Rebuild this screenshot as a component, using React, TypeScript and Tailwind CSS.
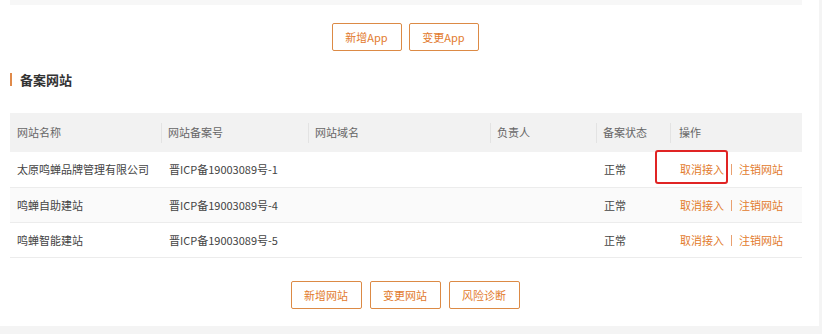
const rows = [
  { name: '太原鸣蝉品牌管理有限公司', icp: '晋ICP备19003089号-1', highlight: true },
  { name: '鸣蝉自助建站', icp: '晋ICP备19003089号-4', highlight: false },
  { name: '鸣蝉智能建站', icp: '晋ICP备19003089号-5', highlight: false },
];

const cols = ['网站名称', '网站备案号', '网站域名', '负责人', '备案状态', '操作'];
const widths = ['w-[151px]', 'w-[147px]', 'w-[182px]', 'w-[106px]', 'w-[74px]', 'flex-1'];

const OutlineButton = ({ label, w }: { label: string; w: string }) => (
  <button
    className={`${w} h-[28px] border border-[#dc8a45] rounded-[2px] text-[11px] text-[#e27a2c] bg-white`}
  >
    {label}
  </button>
);

export default function App() {
  return (
    <div
      className="w-[822px] h-[334px] bg-[#f4f4f4] overflow-hidden"
      style={{ fontFamily: '"Noto Sans CJK SC", "Liberation Sans", sans-serif' }}
    >
      <div className="w-[819px] h-[326px] bg-white flex flex-col">
        <div className="mx-[10px] w-[792px] h-[5px] bg-[#f7f7f7]" />

        <div className="flex justify-center gap-[7px] mt-[18px] pr-[9px]">
          <OutlineButton label="新增App" w="w-[70px]" />
          <OutlineButton label="变更App" w="w-[70px]" />
        </div>

        <div className="flex items-center mt-[21px] ml-[10px] h-[14px]">
          <div className="w-[2px] h-[13px] bg-[#e08a4a]" />
          <span className="ml-[8px] text-[13px] font-semibold text-[#333] leading-none">备案网站</span>
        </div>

        <div className="mt-[27px] mx-[10px] w-[792px] text-[11px]">
          <div className="flex h-[39px] items-center bg-[#f2f2f2] text-[#666]">
            {cols.map((c, i) => (
              <div key={c} className={`${widths[i]} h-[20px] flex items-center pl-[7px] relative`}>
                {i > 0 && <div className="absolute left-0 top-0 w-px h-[20px] bg-[#e3e3e3]" />}
                <span className={i === 5 ? 'pl-[2px]' : ''}>{c}</span>
              </div>
            ))}
          </div>
          {rows.map((r, idx) => (
            <div
              key={r.icp}
              className={`flex items-center border-b border-[#ececec] text-[#444] ${
                idx === 1 ? 'bg-[#fafafa]' : 'bg-white'
              } ${idx === 0 ? 'h-[36px]' : 'h-[35px]'}`}
            >
              <div className="w-[151px] pl-[7px]">{r.name}</div>
              <div className="w-[147px] pl-[8px]">{r.icp}</div>
              <div className="w-[182px]" />
              <div className="w-[106px]" />
              <div className="w-[74px] pl-[8px]">正常</div>
              <div className="flex-1 self-stretch flex items-center pl-[10px] relative text-[#e27a2c]">
                {r.highlight && (
                  <div className="absolute left-[-15px] top-[-2px] w-[73px] h-[34px] border-[2px] border-[#e02424] rounded-[3px]" />
                )}
                <span>取消接入</span>
                <span className="mx-[7px] w-px h-[11px] bg-[#e9a070]" />
                <span>注销网站</span>
              </div>
            </div>
          ))}
        </div>

        <div className="flex justify-center gap-[8px] mt-[23px] pr-[9px]">
          <OutlineButton label="新增网站" w="w-[71px]" />
          <OutlineButton label="变更网站" w="w-[71px]" />
          <OutlineButton label="风险诊断" w="w-[71px]" />
        </div>
      </div>
    </div>
  );
}
